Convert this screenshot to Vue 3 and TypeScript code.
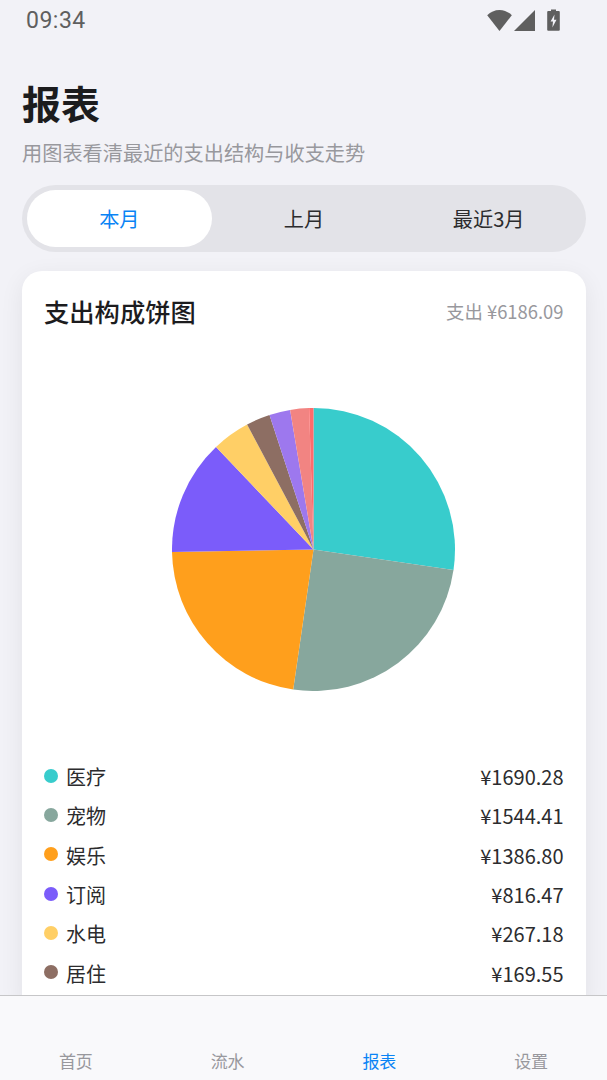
<script setup lang="ts">
import { computed, ref } from "vue";

interface Slice {
  name: string;
  amount: number;
  color: string;
}

const periods = ["本月", "上月", "最近3月"];
const activePeriod = ref(0);

const tabs = ["首页", "流水", "报表", "设置"];
const activeTab = ref(2);

const slices: Slice[] = [
  { name: "医疗", amount: 1690.28, color: "#38cccc" },
  { name: "宠物", amount: 1544.41, color: "#87a79d" },
  { name: "娱乐", amount: 1386.8, color: "#ff9f1c" },
  { name: "订阅", amount: 816.47, color: "#7b5cfa" },
  { name: "水电", amount: 267.18, color: "#ffcf66" },
  { name: "居住", amount: 169.55, color: "#8d6e63" },
  { name: "", amount: 148, color: "#9d78ee" },
  { name: "", amount: 133, color: "#f28482" },
  { name: "", amount: 30.4, color: "#ff6b6b" },
];

const legend = slices.filter((s) => s.name);
const total = 6186.09;
const radius = 141.5;

const arcs = computed(() => {
  const sum = slices.reduce((acc, s) => acc + s.amount, 0);
  let angle = -Math.PI / 2;
  return slices.map((s) => {
    const sweep = (s.amount / sum) * Math.PI * 2;
    const x1 = radius * Math.cos(angle);
    const y1 = radius * Math.sin(angle);
    angle += sweep;
    const x2 = radius * Math.cos(angle);
    const y2 = radius * Math.sin(angle);
    const large = sweep > Math.PI ? 1 : 0;
    return {
      color: s.color,
      d: `M0 0L${x1.toFixed(2)} ${y1.toFixed(2)}A${radius} ${radius} 0 ${large} 1 ${x2.toFixed(2)} ${y2.toFixed(2)}Z`,
    };
  });
});
</script>

<template>
  <div class="app">
    <div class="status-bar">
      <span class="status-bar__time">09:34</span>
      <div class="status-bar__icons">
        <svg width="25" height="22" viewBox="0 0 25 22">
          <path d="M0.200 6.300C3.500 3 7.800 1 12.500 1S21.500 3 24.800 6.300L12.500 22Z" fill="#5f5f5f" />
        </svg>
        <svg width="21" height="22" viewBox="0 0 21 22">
          <path d="M21 1V22H0Z" fill="#5f5f5f" />
        </svg>
        <svg class="status-bar__battery" width="13" height="22" viewBox="0 0 13 22">
          <path d="M4 0.500H9V2H11.800A1 1 0 0 1 12.800 3V20.800A1 1 0 0 1 11.800 21.800H1.200A1 1 0 0 1 0.200 20.800V3A1 1 0 0 1 1.200 2H4Z" fill="#5f5f5f" />
          <path d="M7.500 5.500L3.600 12.500H6L5.400 18.500L9.500 10.800H7Z" fill="#f2f2f7" />
        </svg>
      </div>
    </div>

    <main class="content">
      <h1 class="content__title">报表</h1>
      <p class="content__subtitle">用图表看清最近的支出结构与收支走势</p>

      <div class="segment">
        <button
          v-for="(period, i) in periods"
          :key="period"
          type="button"
          class="segment__item"
          :class="{ 'segment__item--active': i === activePeriod }"
          @click="activePeriod = i"
        >
          {{ period }}
        </button>
      </div>

      <section class="card">
        <header class="card__head">
          <h2 class="card__title">支出构成饼图</h2>
          <span class="card__total">支出 ¥{{ total.toFixed(2) }}</span>
        </header>

        <div class="pie">
          <svg width="283" height="283" viewBox="-141.500 -141.500 283 283">
            <path v-for="arc in arcs" :key="arc.color" :d="arc.d" :fill="arc.color" />
          </svg>
        </div>

        <ul class="legend">
          <li v-for="item in legend" :key="item.name" class="legend__row">
            <i class="legend__dot" :style="{ background: item.color }"></i>
            <span class="legend__name">{{ item.name }}</span>
            <span class="legend__amount">¥{{ item.amount.toFixed(2) }}</span>
          </li>
        </ul>
      </section>
    </main>

    <nav class="tabbar">
      <button
        v-for="(tab, i) in tabs"
        :key="tab"
        type="button"
        class="tabbar__item"
        :class="{ 'tabbar__item--active': i === activeTab }"
        @click="activeTab = i"
      >
        {{ tab }}
      </button>
    </nav>
  </div>
</template>

<style scoped>
.app {
  display: flex;
  flex-direction: column;
  width: 607px;
  height: 1080px;
  overflow: hidden;
  background: #f2f2f7;
  font-family: "Noto Sans CJK SC", "Noto Sans", sans-serif;
  color: #1c1c1e;
}

.status-bar {
  display: flex;
  flex: none;
  align-items: center;
  justify-content: space-between;
  height: 40px;
  padding: 0 47px 0 26px;
}

.status-bar__time {
  font-family: Roboto, sans-serif;
  font-size: 23px;
  letter-spacing: 0.5px;
  color: #5f5f5f;
}

.status-bar__icons {
  display: flex;
  align-items: center;
  gap: 2px;
}

.status-bar__battery {
  margin-left: 10px;
}

.content {
  flex: 1;
  min-height: 0;
  overflow: hidden;
  padding: 0 21px 0 22px;
}

.content__title {
  margin: 34px 0 0;
  font-size: 39px;
  line-height: 56px;
  font-weight: 700;
}

.content__subtitle {
  margin: 8px 0 0;
  font-size: 20.200px;
  line-height: 30px;
  color: #98989d;
}

.segment {
  display: flex;
  height: 67px;
  margin-top: 17px;
  padding: 5px;
  border-radius: 34px;
  background: #e3e3e8;
  box-sizing: border-box;
}

.segment__item {
  flex: 1;
  border: 0;
  border-radius: 29px;
  background: transparent;
  font: inherit;
  font-size: 20.200px;
  color: #2c2c2e;
}

.segment__item--active {
  background: #ffffff;
  color: #0a84f5;
}

.card {
  margin-top: 19px;
  padding: 20px 22.500px 24px 22px;
  border-radius: 20px;
  background: #ffffff;
  box-shadow: 0 6px 24px rgba(0, 0, 0, 0.07);
}

.card__head {
  display: flex;
  align-items: center;
  justify-content: space-between;
  height: 40px;
}

.card__title {
  margin: 0;
  font-size: 25.300px;
  font-weight: 500;
}

.card__total {
  font-size: 18.400px;
  color: #98989d;
}

.pie {
  display: flex;
  justify-content: center;
  padding: 76.500px 0 66.500px 19px;
}

.pie svg {
  display: block;
}

.legend {
  margin: 0;
  padding: 0;
  list-style: none;
  color: #2c2c2e;
}

.legend__row {
  display: flex;
  align-items: center;
  height: 39.300px;
  font-size: 20px;
}

.legend__dot {
  width: 14px;
  height: 14px;
  margin-right: 8px;
  border-radius: 50%;
  transform: translateY(-1px);
}

.legend__name {
  flex: 1;
}

.tabbar {
  position: relative;
  display: flex;
  flex: none;
  height: 85px;
  box-sizing: border-box;
  padding-bottom: 7px;
  border-top: 1px solid #c6c6c8;
  background: #f9f9fb;
}

.tabbar__item {
  flex: 1;
  display: flex;
  align-items: flex-end;
  justify-content: center;
  border: 0;
  padding: 0;
  background: transparent;
  font: inherit;
  font-size: 17px;
  color: #98989d;
}

.tabbar__item--active {
  color: #0a84f5;
}
</style>
